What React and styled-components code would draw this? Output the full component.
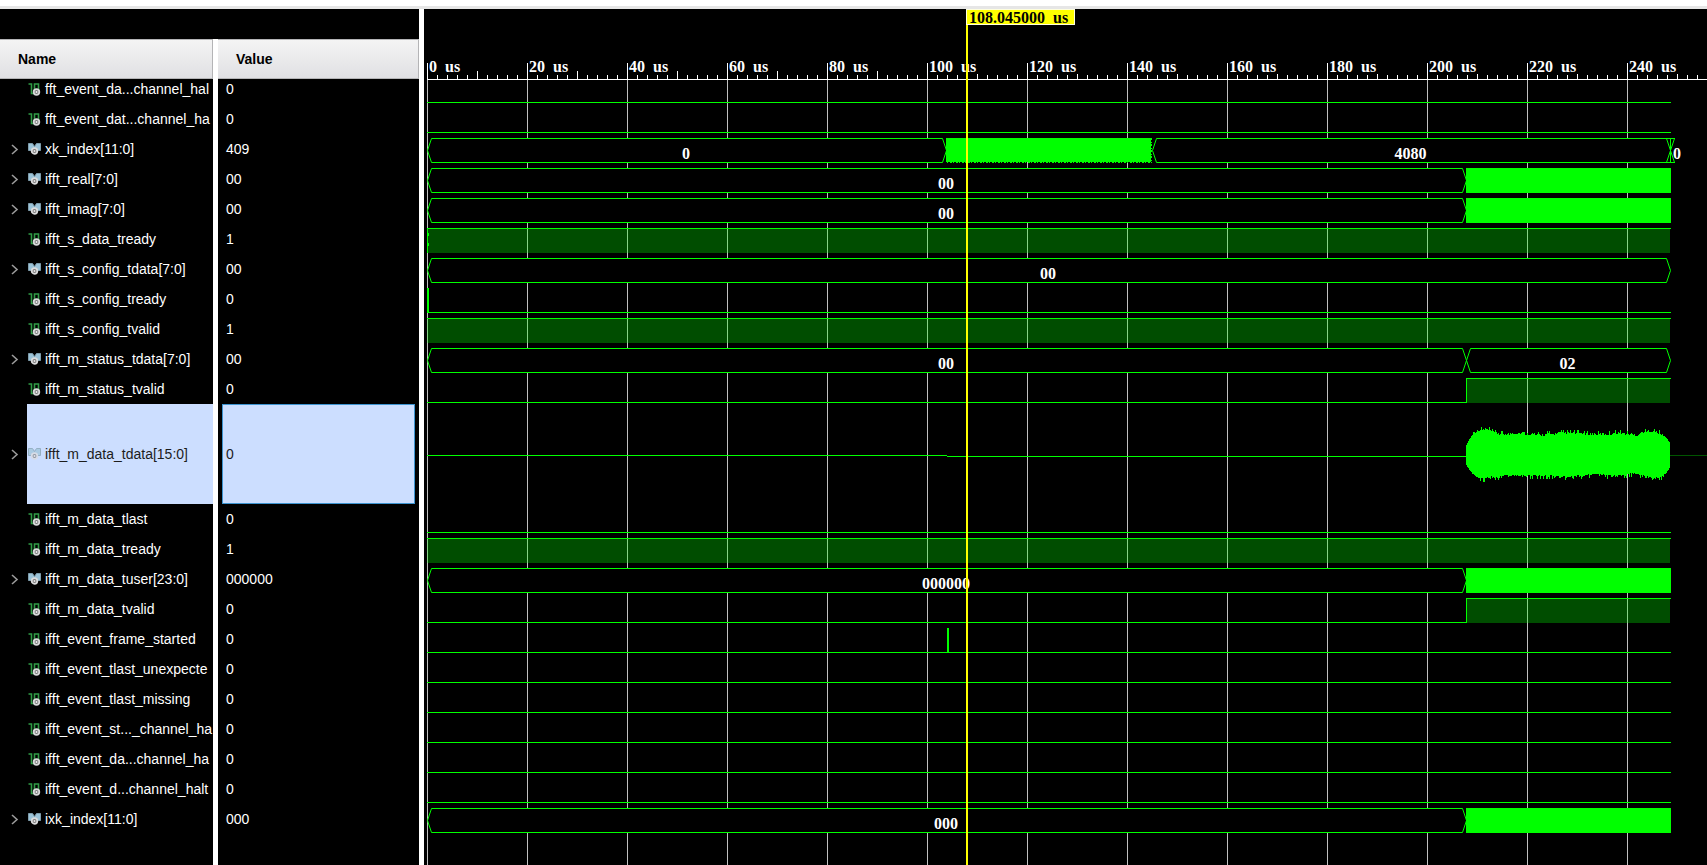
import React from 'react';
import styled, { createGlobalStyle } from 'styled-components';

const GREEN = '#00ff00';
const SHADE = 'rgba(0, 255, 0, 0.3)';

// time axis: 5px per us, starting 3px inside the wave pane
const ORIGIN = 3;
const PX_PER_US = 5;
const END = 1247;
const BURST = 1042;
const CURSOR_US = 108.045;

const ROW = 30;
const TALL_ROW = 100;

const GlobalStyle = createGlobalStyle`
  html, body, #root {
    height: 100%;
  }
  body {
    margin: 0;
    background: #ffffff;
    font-family: "Liberation Sans", Arial, sans-serif;
    font-size: 14px;
  }
`;

const Window = styled.div`
  display: flex;
  flex-direction: column;
  height: 100%;
  min-height: 840px;
  overflow: hidden;
`;
const TopEdge = styled.div`
  height: 6px;
  flex: none;
  border-bottom: 3px solid #e6e6e6;
`;
const Panes = styled.main`
  display: flex;
  flex: 1;
  min-height: 0;
`;
const SignalPane = styled.section`
  display: flex;
  flex-direction: column;
  flex: none;
  width: 419px;
  padding-top: 30px;
  border-right: 5px solid #ffffff;
  background: #000000;
`;
const SignalTable = styled.table`
  display: block;
  flex: 1;
  background: linear-gradient(90deg, #000000 213px, #ffffff 213px 218px, #000000 218px);
`;
const TableHead = styled.thead`
  display: block;
  position: relative;
  z-index: 1;
`;
const TableBody = styled.tbody`
  display: block;
  margin-top: -5px;
`;
const TableRow = styled.tr`
  display: grid;
  grid-template-columns: 213px 1fr;
  column-gap: 5px;
  height: ${props => props.$height}px;
`;
const HeadCell = styled.th`
  display: flex;
  align-items: center;
  box-sizing: border-box;
  height: 40px;
  padding: 0 0 0 18px;
  border: 1px solid #b4b4b6;
  border-left: 0;
  background: linear-gradient(#f4f4f4, #e0e0e3);
  color: #000000;
`;
const NameCell = styled.td`
  display: flex;
  align-items: stretch;
  padding: 0;
  overflow: hidden;
`;
const Gutter = styled.span`
  display: flex;
  align-items: center;
  flex: none;
  width: 27px;
`;
const ExpandButton = styled.button`
  display: flex;
  margin-left: 11px;
  padding: 1px 0 0;
  border: 0;
  background: none;
  cursor: pointer;
`;
const NameLabel = styled.span`
  display: flex;
  align-items: center;
  flex: 1;
  gap: 4px;
  padding-left: 1px;
  white-space: nowrap;
  background: ${props => (props.$selected ? '#ccdeff' : 'transparent')};
  color: ${props => (props.$selected ? '#1c1c1c' : '#ffffff')};
`;
const ValueCell = styled.td`
  display: flex;
  align-items: center;
  margin: 0 4px;
  padding: 0 0 0 3px;
  border: 1px solid ${props => (props.$selected ? '#3d94d0' : 'transparent')};
  background: ${props => (props.$selected ? '#ccdeff' : 'transparent')};
  color: ${props => (props.$selected ? '#1c1c1c' : '#ffffff')};
`;
const IconSvg = styled.svg`
  flex: none;
  opacity: ${props => (props.$faded ? 0.7 : 1)};
`;

const WavePane = styled.section`
  position: relative;
  flex: 1;
  min-width: 0;
  overflow: hidden;
  background: #000000;
  font-family: "Liberation Serif", "Times New Roman", serif;
  font-size: 16px;
  font-weight: bold;
`;
const RulerLabels = styled.div`
  display: flex;
  height: 18px;
  padding-top: 49px;
  padding-left: ${ORIGIN}px;
  color: #ffffff;
  line-height: 18px;
`;
const RulerLabel = styled.span`
  flex: none;
  box-sizing: border-box;
  width: 100px;
  padding-left: 2px;
`;
const Unit = styled.span`
  margin-left: 4px;
`;
const Drawing = styled.svg`
  display: block;
`;
const Ruler = styled(Drawing)`
  margin-top: -13px;
`;
const CursorLine = styled.div`
  position: absolute;
  top: 0;
  bottom: 0;
  width: 2px;
  background: #ffff00;
`;
const CursorFlag = styled.div`
  position: absolute;
  top: 0;
  box-sizing: border-box;
  width: 109px;
  height: 16px;
  padding-left: 2px;
  border: 1px solid #ffffe0;
  background: #ffff00;
  color: #000000;
  line-height: 16px;
  white-space: nowrap;
`;

const bus = (...segments) => ({ type: 'bus', segments });
const SIGNALS = [
  { name: 'fft_event_da...channel_hal', value: '0', wave: { type: 'low' } },
  { name: 'fft_event_dat...channel_ha', value: '0', wave: { type: 'low' } },
  { name: 'xk_index[11:0]', value: '409', wave: { type: 'index' } },
  { name: 'ifft_real[7:0]', value: '00', wave: bus([ORIGIN, BURST, '00'], [BURST, END]) },
  { name: 'ifft_imag[7:0]', value: '00', wave: bus([ORIGIN, BURST, '00'], [BURST, END]) },
  { name: 'ifft_s_data_tready', value: '1', wave: { type: 'high', glitch: true } },
  { name: 'ifft_s_config_tdata[7:0]', value: '00', wave: bus([ORIGIN, END, '00']) },
  { name: 'ifft_s_config_tready', value: '0', wave: { type: 'low', pulse: ORIGIN } },
  { name: 'ifft_s_config_tvalid', value: '1', wave: { type: 'high' } },
  { name: 'ifft_m_status_tdata[7:0]', value: '00', wave: bus([ORIGIN, BURST, '00'], [BURST, END, '02']) },
  { name: 'ifft_m_status_tvalid', value: '0', wave: { type: 'rise' } },
  { name: 'ifft_m_data_tdata[15:0]', value: '0', wave: { type: 'analog' }, selected: true },
  { name: 'ifft_m_data_tlast', value: '0', wave: { type: 'low' } },
  { name: 'ifft_m_data_tready', value: '1', wave: { type: 'high' } },
  { name: 'ifft_m_data_tuser[23:0]', value: '000000', wave: bus([ORIGIN, BURST, '000000'], [BURST, END]) },
  { name: 'ifft_m_data_tvalid', value: '0', wave: { type: 'rise' } },
  { name: 'ifft_event_frame_started', value: '0', wave: { type: 'low', pulse: 523 } },
  { name: 'ifft_event_tlast_unexpecte', value: '0', wave: { type: 'low' } },
  { name: 'ifft_event_tlast_missing', value: '0', wave: { type: 'low' } },
  { name: 'ifft_event_st..._channel_ha', value: '0', wave: { type: 'low' } },
  { name: 'ifft_event_da...channel_ha', value: '0', wave: { type: 'low' } },
  { name: 'ifft_event_d...channel_halt', value: '0', wave: { type: 'low' } },
  { name: 'ixk_index[11:0]', value: '000', wave: bus([ORIGIN, BURST, '000'], [BURST, END]) },
];

const isBus = signal => signal.name.includes('[');

const BusIcon = ({ faded }) => (
  <IconSvg width="13" height="12" viewBox="0 0 13 12" $faded={faded} aria-hidden="true">
    <path d="M0.5 0.5H4.5L6.5 3.5L8.5 0.5H12.5V7.5H0.5Z" fill="#9cc4d8" stroke="#7f9dac" />
    <circle cx="6.5" cy="8" r="2.8" fill="#777777" stroke="#dcdcdc" strokeWidth="1.8" />
    <circle cx="6.5" cy="8" r="1" fill="#e8e8e8" />
  </IconSvg>
);

const BitIcon = () => (
  <IconSvg width="13" height="13" viewBox="0 0 13 13" aria-hidden="true">
    <path d="M0.5 1H3.5V10.5H6.5V1H10.5V7" fill="none" stroke="#2f9a45" strokeWidth="1.6" />
    <circle cx="8.5" cy="9" r="2.8" fill="#777777" stroke="#d8d8d8" strokeWidth="1.8" />
    <circle cx="8.5" cy="9" r="1" fill="#f0f0f0" />
  </IconSvg>
);

const SignalRow = ({ signal }) => (
  <TableRow $height={signal.selected ? TALL_ROW : ROW}>
    <NameCell>
      <Gutter>
        {isBus(signal) && (
          <ExpandButton aria-label={`Expand ${signal.name}`}>
            <svg width="8" height="11" viewBox="0 0 8 11">
              <path d="M1 1L6 5.5L1 10" fill="none" stroke="#9a9a9a" strokeWidth="1.6" />
            </svg>
          </ExpandButton>
        )}
      </Gutter>
      <NameLabel $selected={signal.selected}>
        {isBus(signal) ? <BusIcon faded={signal.selected} /> : <BitIcon />}
        {signal.name}
      </NameLabel>
    </NameCell>
    <ValueCell $selected={signal.selected}>{signal.value}</ValueCell>
  </TableRow>
);

const Bar = ({ x, y, w, h = 1, fill = GREEN }) => (
  <rect x={x} y={y} width={w} height={h} fill={fill} />
);

// hexagonal bus cell, edges on half pixels so that the lines stay crisp
const BusCell = ({ from, to, text }) => {
  const l = from + 0.5;
  const r = to - 0.5;
  return (
    <>
      <rect x={from + 1} y="5" width={to - from - 2} height="23" fill="#000000" />
      <path
        d={`M${l + 4} 28.5L${l} 16.5L${l + 4} 4.5H${r - 4}L${r} 16.5L${r - 4} 28.5Z`}
        fill="none"
        stroke={GREEN}
      />
      <text x={(from + to) / 2 - 1} y="25" fill="#ffffff" textAnchor="middle">{text}</text>
    </>
  );
};

const IndexTrace = () => (
  <>
    <BusCell from={ORIGIN} to={523} text="0" />
    <BusCell from={728} to={END} text="4080" />
    <Bar x={522} y={4} w={205} h={24} />
    <path d="M523 28.5H728" stroke={GREEN} strokeDasharray="1 2 2 1" />
    <path d="M727.5 4V29" stroke={GREEN} strokeDasharray="2 2 1 1" />
    <Bar x={1246} y={4} w={1} h={25} />
    <path d="M1250.5 4.5L1246.5 16.5L1250.5 28.5M1242 4.5H1251M1242 28.5H1251" fill="none" stroke={GREEN} />
    <text x="1249" y="25" fill="#ffffff">0</text>
  </>
);

// [x, y] knots of the burst envelope, measured from the middle of the tall row
const UPPER = [[0, 10], [2, 14], [5, 19], [8, 22], [13, 24], [20, 25], [26, 22], [35, 20], [55, 21], [62, 20], [75, 19], [95, 21], [112, 21], [122, 20], [140, 20], [152, 21], [160, 20], [170, 19], [177, 22], [186, 23], [195, 20], [200, 17], [204, 11]];
const LOWER = [[0, 9], [3, 14], [7, 18], [12, 21], [18, 22], [27, 20], [45, 19], [75, 19], [100, 20], [125, 18], [150, 19], [164, 17], [174, 18], [186, 22], [195, 20], [200, 17], [204, 10]];

const envelope = (knots, x) => {
  const i = knots.findIndex(k => k[0] > x);
  const [x0, y0] = knots[i - 1];
  const [x1, y1] = knots[i];
  return y0 + ((y1 - y0) * (x - x0)) / (x1 - x0);
};
const jitter = n => {
  const v = Math.abs(Math.sin(n * 12.9898) * 43758.5453) % 1;
  return v > 0.86 ? 4 : Math.floor(v * 3);
};
const burst = Array.from({ length: 204 }, (_, x) => {
  const edge = x < 6 || x > 198 ? 0 : 1;
  const up = Math.round(envelope(UPPER, x)) + edge * jitter(x + 1);
  const down = Math.round(envelope(LOWER, x)) + edge * jitter(x + 301);
  return `M${BURST + x} ${51 - up}h1V${52 + down}h-1Z`;
}).join('');

const AnalogTrace = () => (
  <>
    <Bar x={ORIGIN} y={51} w={520} />
    <Bar x={523} y={52} w={520} />
    <path d={burst} fill={GREEN} shapeRendering="crispEdges" />
    <Bar x={1246} y={51} w={3000} fill="#005500" />
  </>
);

const Trace = ({ wave }) => {
  switch (wave.type) {
    case 'index':
      return <IndexTrace />;
    case 'analog':
      return <AnalogTrace />;
    case 'bus':
      return wave.segments.map(([from, to, text], i) => (
        text
          ? <BusCell key={from} from={from} to={i < wave.segments.length - 1 ? to + 1 : to} text={text} />
          : <Bar key={from} x={from} y={4} w={to - from} h={25} />
      ));
    case 'high':
      return (
        <>
          <Bar x={ORIGIN} y={4} w={END - ORIGIN} />
          <Bar x={ORIGIN} y={5} w={END - ORIGIN - 1} h={24} fill={SHADE} />
          {wave.glitch && <path d="M3.5 4V29M4.5 9V12M4.5 19V22" stroke={GREEN} />}
        </>
      );
    case 'rise':
      return (
        <>
          <Bar x={ORIGIN} y={28} w={BURST - ORIGIN} />
          <Bar x={BURST} y={4} w={1} h={25} />
          <Bar x={BURST} y={4} w={END - BURST} />
          <Bar x={BURST + 1} y={5} w={END - BURST - 2} h={24} fill={SHADE} />
        </>
      );
    default:
      return (
        <>
          <Bar x={ORIGIN} y={28} w={END - ORIGIN} />
          {wave.pulse && <Bar x={wave.pulse} y={4} w={2} h={25} />}
        </>
      );
  }
};

const MAJORS = Array.from({ length: 13 }, (_, i) => i * 20);
const TICKS = Array.from({ length: 128 }, (_, i) => i * 2);

const tickTop = us => {
  if (us % 20 === 0) return 0;
  if (us % 10 === 0) return us < 100 ? 8 : 11;
  return 12;
};

let top = -6;
const TRACES = SIGNALS.map(signal => {
  const y = top;
  top += signal.selected ? TALL_ROW : ROW;
  return { ...signal, y };
});

const Waves = () => (
  <WavePane aria-label="Waveforms">
    <RulerLabels>
      {MAJORS.map(us => (
        <RulerLabel key={us}>{us}<Unit> us</Unit></RulerLabel>
      ))}
    </RulerLabels>
    <Ruler width="100%" height="17" aria-hidden="true">
      {TICKS.map(us => (
        <Bar key={us} x={ORIGIN + us * PX_PER_US} y={tickTop(us)} w={1} h={17 - tickTop(us)} fill="#ffffff" />
      ))}
      <Bar x={ORIGIN} y={16} w="100%" fill="#ffffff" />
    </Ruler>
    <Drawing width="100%" height="100%">
      {MAJORS.map(us => (
        <Bar key={us} x={ORIGIN + us * PX_PER_US} y={0} w={1} h="100%" fill="#c0c0c0" />
      ))}
      {TRACES.map(trace => (
        <g key={trace.y} transform={`translate(0 ${trace.y})`}>
          <Trace wave={trace.wave} />
        </g>
      ))}
    </Drawing>
    <CursorLine style={{ left: Math.floor(CURSOR_US * PX_PER_US) + 2 }} />
    <CursorFlag style={{ left: Math.floor(CURSOR_US * PX_PER_US) + 2 }}>
      {CURSOR_US.toFixed(6)}<Unit> us</Unit>
    </CursorFlag>
  </WavePane>
);

const App = () => (
  <Window>
    <GlobalStyle />
    <TopEdge />
    <Panes>
      <SignalPane>
        <SignalTable>
          <TableHead>
            <TableRow $height={40}>
              <HeadCell>Name</HeadCell>
              <HeadCell>Value</HeadCell>
            </TableRow>
          </TableHead>
          <TableBody>
            {SIGNALS.map((signal, i) => <SignalRow key={i} signal={signal} />)}
          </TableBody>
        </SignalTable>
      </SignalPane>
      <Waves />
    </Panes>
  </Window>
);

export default App;
